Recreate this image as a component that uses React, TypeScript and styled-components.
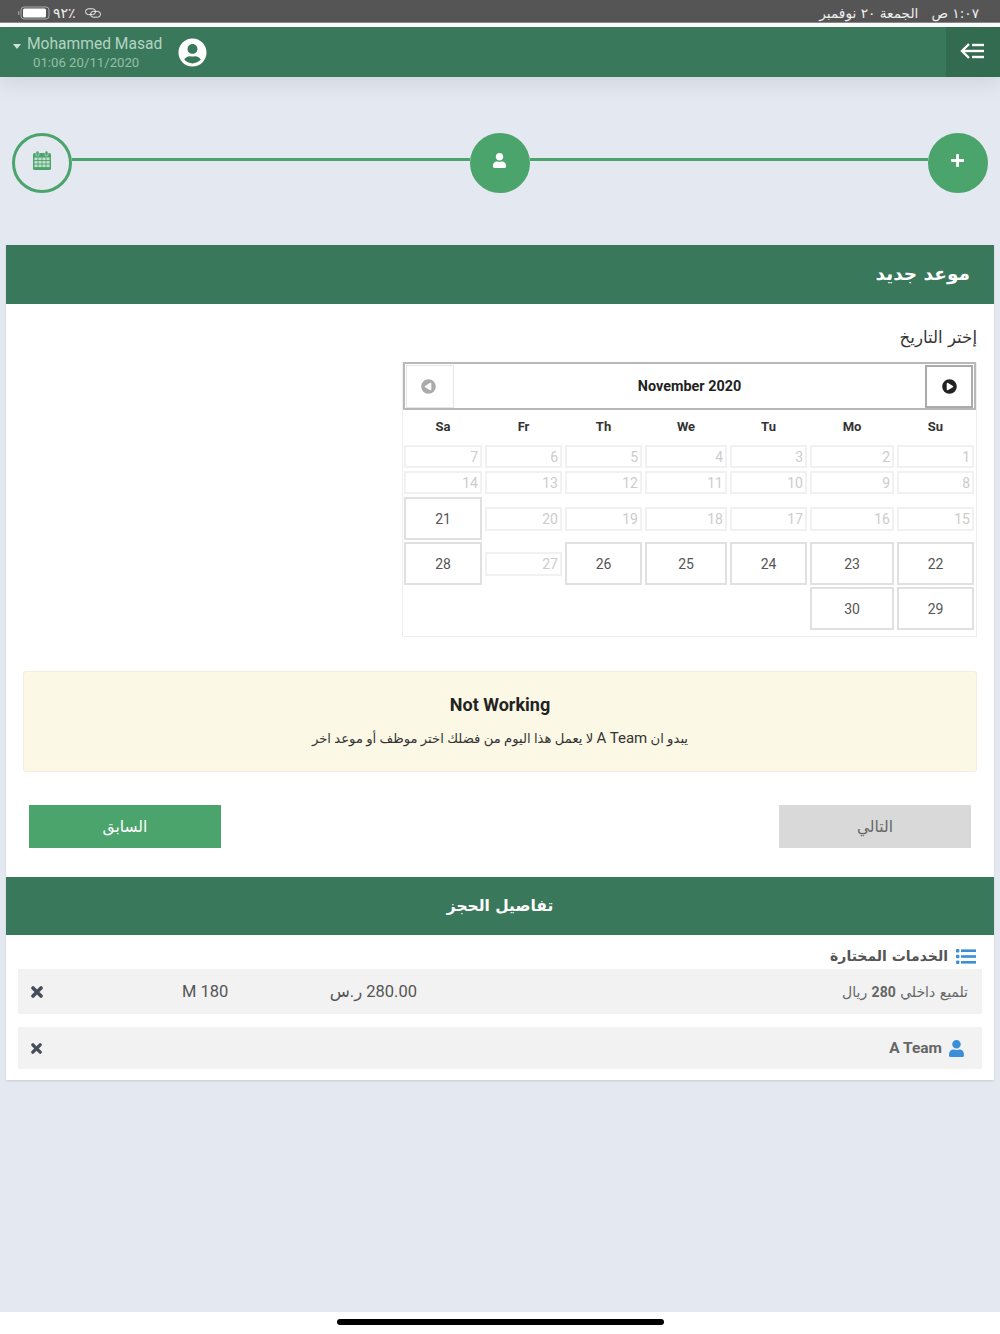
import React from "react";
import styled, { createGlobalStyle } from "styled-components";
import { FaUser, FaPlus, FaUserCircle, FaPlayCircle } from "react-icons/fa";

const Global = createGlobalStyle`
  html, body { margin: 0; padding: 0; }
  body { font-family: Roboto, "DejaVu Sans", sans-serif; background: #e4e9f1; }
  * { box-sizing: border-box; }
`;

const Page = styled.div`
  width: 1000px;
  height: 1334px;
  display: flex;
  flex-direction: column;
  overflow: hidden;
  background: #e4e9f1;
`;

const StatusBar = styled.div`
  height: 23px;
  flex: none;
  background: #555;
  border-bottom: 1px solid #8a8a8a;
  color: #f0f0f0;
  display: flex;
  align-items: center;
  justify-content: space-between;
  padding: 3px 21px 0 18px;
  font-family: "DejaVu Sans", sans-serif;
  font-size: 14px;
`;

const StatusLeft = styled.div`
  display: flex;
  align-items: center;
  gap: 3px;
`;

const StatusLink = styled.svg`
  margin-left: 6px;
`;

const StatusRight = styled.div`
  direction: rtl;
  white-space: pre;
  font-size: 13.7px;
`;

const WhiteGap = styled.div`
  height: 4px;
  flex: none;
  background: #fff;
`;

const Header = styled.header`
  height: 50px;
  flex: none;
  background: #39785a;
  display: flex;
  justify-content: space-between;
  box-shadow: 0 6px 20px rgba(60, 70, 90, 0.13);
  position: relative;
`;

const UserBlock = styled.div`
  display: flex;
  align-items: center;
  padding-left: 13px;
`;

const Caret = styled.span`
  width: 0;
  height: 0;
  border-left: 4.5px solid transparent;
  border-right: 4.5px solid transparent;
  border-top: 5px solid #cfe2d7;
  margin: 0 6px 12px 0;
`;

const UserText = styled.div`
  display: flex;
  flex-direction: column;
  padding-top: 2px;
`;

const UserName = styled.div`
  font-size: 15.6px;
  line-height: 19px;
  color: #b5d3c3;
`;

const UserDate = styled.div`
  font-size: 13.2px;
  line-height: 16px;
  color: #94bfa8;
  margin: 1px 0 0 6px;
`;

const Avatar = styled(FaUserCircle)`
  color: #fff;
  font-size: 29px;
  margin-left: 16px;
`;

const MenuButton = styled.div`
  width: 54px;
  background: #336b51;
  display: flex;
  align-items: center;
  justify-content: center;
  padding: 0 2px 2px 0;
`;

const Stepper = styled.div`
  flex: none;
  display: flex;
  padding: 56px 12px 52px;
`;

const StepCircle = styled.div<{ $outlined?: boolean }>`
  width: 60px;
  height: 60px;
  flex: none;
  border-radius: 50%;
  border: 3px solid #4ba46b;
  background: ${(p) => (p.$outlined ? "transparent" : "#4ba46b")};
  color: ${(p) => (p.$outlined ? "#4ba46b" : "#fff")};
  display: flex;
  align-items: center;
  justify-content: center;
  font-size: 18px;
  padding: 0 1px 5px 0;
`;

const StepLine = styled.div`
  flex: 1;
  height: 3px;
  margin-top: 25px;
  background: #4ba46b;
`;

const Card = styled.section`
  margin: 0 6px;
  flex: none;
  background: #fff;
  box-shadow: 0 1px 2px rgba(0, 0, 0, 0.12);
`;

const BookingHead = styled.div`
  height: 59px;
  background: #39785a;
  color: #fff;
  font-family: "DejaVu Sans", sans-serif;
  font-weight: 700;
  font-size: 18.5px;
  direction: rtl;
  display: flex;
  align-items: center;
  padding: 0 24px 3px 0;
`;

const CardBody = styled.div`
  height: 573px;
  padding: 22px 17px 0;
  display: flex;
  flex-direction: column;
`;

const FieldLabel = styled.div`
  direction: rtl;
  font-family: "DejaVu Sans", sans-serif;
  font-size: 16.6px;
  line-height: 24px;
  color: #333;
  margin-bottom: 12px;
`;

const Calendar = styled.div`
  width: 575px;
  height: 275px;
  margin-left: auto;
  border: 1px solid #eee;
  border-top: 0;
`;

const CalNav = styled.div`
  height: 48px;
  border: 2px solid #b8b8b8;
  background: #fff;
  display: flex;
  align-items: center;
  justify-content: space-between;
  padding: 1px;
  color: #222;
  font-size: 14.4px;
  font-weight: 700;
`;

const CalButton = styled.div<{ $active?: boolean }>`
  width: 48px;
  height: 43px;
  border: ${(p) => (p.$active ? "2px solid #aaa" : "1px solid #e6e6e6")};
  color: ${(p) => (p.$active ? "#222" : "#aaa")};
  display: flex;
  align-items: center;
  justify-content: center;
  font-size: 15px;
  padding-right: ${(p) => (p.$active ? "0" : "3px")};
`;

const PrevIcon = styled(FaPlayCircle)`
  transform: scaleX(-1);
`;

const CalGrid = styled.div`
  display: grid;
  grid-template-columns: 78px 77px 77px 82px 77px 84px 77px;
  grid-template-rows: 33px 24px 24px 43px 43px 43px;
  gap: 2px 3px;
  padding-left: 1px;
`;

const DayName = styled.div`
  font-size: 13px;
  font-weight: 700;
  color: #333;
  display: flex;
  align-items: center;
  justify-content: center;
`;

const DisabledDay = styled.div<{ $tall?: boolean }>`
  height: ${(p) => (p.$tall ? "24px" : "23px")};
  align-self: ${(p) => (p.$tall ? "center" : "start")};
  border: 2px solid #f1f1f1;
  color: #ccc;
  font-size: 14px;
  display: flex;
  align-items: center;
  justify-content: flex-end;
  padding-right: 2px;
`;

const ActiveDay = styled.div`
  border: 2px solid #e0e0e0;
  color: #555;
  font-size: 14px;
  display: flex;
  align-items: center;
  justify-content: center;
`;

const Alert = styled.div`
  height: 101px;
  margin-top: 34px;
  flex: none;
  background: #fcf8e6;
  border: 1px solid #f6eedb;
  border-radius: 3px;
  display: flex;
  flex-direction: column;
  align-items: center;
  color: #222;
`;

const AlertTitle = styled.div`
  margin-top: 22px;
  font-size: 18px;
  line-height: 22px;
  font-weight: 700;
`;

const AlertText = styled.div`
  margin-top: 12px;
  direction: rtl;
  font-size: 13.2px;
  line-height: 20px;
  color: #333;
`;

const AlertLatin = styled.span`
  font-size: 15px;
`;

const Actions = styled.div`
  display: flex;
  justify-content: space-between;
  padding: 0 6px;
  margin-top: 33px;
`;

const ActionButton = styled.div<{ $primary?: boolean }>`
  width: 192px;
  height: 43px;
  background: ${(p) => (p.$primary ? "#4ba46b" : "#d9d9d9")};
  color: ${(p) => (p.$primary ? "#fff" : "#666")};
  font-family: "DejaVu Sans", sans-serif;
  font-size: 15.5px;
  display: flex;
  align-items: center;
  justify-content: center;
`;

const DetailsHead = styled.div`
  height: 58px;
  background: #39785a;
  color: #fff;
  font-family: "DejaVu Sans", sans-serif;
  font-weight: 700;
  font-size: 15.5px;
  display: flex;
  align-items: center;
  justify-content: center;
`;

const Details = styled.div`
  height: 145px;
  padding: 8px 12px 0;
`;

const ServicesTitle = styled.div`
  direction: rtl;
  height: 26px;
  display: flex;
  align-items: center;
  gap: 8px;
  padding-right: 6px;
  color: #555;
  font-family: "DejaVu Sans", sans-serif;
  font-weight: 700;
  font-size: 14px;
`;

const ServiceRow = styled.div`
  height: 45px;
  background: #f2f2f2;
  display: grid;
  grid-template-columns: 151px 152px 83px 1fr;
  align-items: center;
  padding: 0 14px 0 13px;
  color: #555;
  font-size: 16.5px;
`;

const RemoveIcon = styled.svg<{ $small?: boolean }>`
  display: block;
  width: ${(p) => (p.$small ? "11px" : "12px")};
  height: ${(p) => (p.$small ? "11px" : "12px")};
  stroke: #454d57;
  stroke-width: 3.6;
  stroke-linecap: round;
`;

const ServiceName = styled.div`
  direction: rtl;
  font-size: 14px;
  color: #666;
  font-family: "DejaVu Sans", sans-serif;
`;

const Strong = styled.b`
  font-family: Roboto, sans-serif;
  font-size: 14px;
`;

const Price = styled.div`
  direction: rtl;
  white-space: nowrap;
`;

const StaffRow = styled.div`
  height: 42px;
  margin-top: 13px;
  background: #f2f2f2;
  display: flex;
  align-items: center;
  justify-content: space-between;
  padding: 0 17px 0 13px;
`;

const StaffName = styled.div`
  display: flex;
  align-items: center;
  gap: 6px;
  color: #666;
  font-size: 15.5px;
  font-weight: 700;
`;

const StaffIcon = styled(FaUser)`
  color: #3a8fd6;
  font-size: 17px;
`;

const Spacer = styled.div`
  flex: 1;
`;

const HomeBar = styled.div`
  height: 22px;
  flex: none;
  background: #fff;
  display: flex;
  justify-content: center;
  padding-top: 7px;
`;

const HomeIndicator = styled.div`
  width: 327px;
  height: 6px;
  border-radius: 3px;
  background: #000;
`;

const rows: Array<Array<{ d: number; on?: boolean }>> = [
  [7, 6, 5, 4, 3, 2, 1].map((d) => ({ d })),
  [14, 13, 12, 11, 10, 9, 8].map((d) => ({ d })),
  [{ d: 21, on: true }, { d: 20 }, { d: 19 }, { d: 18 }, { d: 17 }, { d: 16 }, { d: 15 }],
  [{ d: 28, on: true }, { d: 27 }, { d: 26, on: true }, { d: 25, on: true }, { d: 24, on: true }, { d: 23, on: true }, { d: 22, on: true }],
];

const CalendarGlyph = () => (
  <svg width="18" height="19" viewBox="0 0 18 19" aria-hidden="true">
    <rect x="0" y="2" width="18" height="17" rx="1.6" fill="#4ba46b" />
    <rect x="3" y="0" width="3" height="5" rx="1.4" fill="#4ba46b" stroke="#e4e9f1" strokeWidth="0.6" />
    <rect x="12" y="0" width="3" height="5" rx="1.4" fill="#4ba46b" stroke="#e4e9f1" strokeWidth="0.6" />
    {[6.5, 10, 13.5].map((y) =>
      [1.4, 5.4, 9.4, 13.4].map((x) => (
        <rect key={`${x}-${y}`} x={x} y={y} width="3.2" height="2.6" fill="#c4dccf" />
      ))
    )}
  </svg>
);

const ListGlyph = () => (
  <svg width="20" height="15" viewBox="0 0 20 15" fill="#3a8fd6" aria-hidden="true">
    <rect x="0" y="0" width="3.4" height="3.4" rx="1" />
    <rect x="0" y="5.8" width="3.4" height="3.4" rx="1" />
    <rect x="0" y="11.6" width="3.4" height="3.4" rx="1" />
    <rect x="5" y="0.4" width="15" height="2.6" />
    <rect x="5" y="6.2" width="15" height="2.6" />
    <rect x="5" y="12" width="15" height="2.6" />
  </svg>
);

export default function App() {
  return (
    <Page>
      <Global />
      <StatusBar>
        <StatusLeft>
          <svg width="32" height="14" viewBox="0 0 32 14" aria-hidden="true">
            <rect x="0" y="5" width="1.5" height="4" rx="0.7" fill="#999" />
            <rect x="3" y="1" width="28" height="12" rx="3" fill="none" stroke="#aaa" />
            <rect x="5" y="2.5" width="23" height="9" rx="1.5" fill="#fff" />
          </svg>
          <span dir="rtl">٪٩٢</span>
          <StatusLink width="16" height="10" viewBox="0 0 16 10" fill="none" stroke="#eee" strokeWidth="1" aria-hidden="true">
            <rect x="0.5" y="0.8" width="10" height="5.8" rx="2.9" />
            <rect x="5.5" y="3.4" width="10" height="5.8" rx="2.9" />
          </StatusLink>
        </StatusLeft>
        <StatusRight>{"١:٠٧ ص   الجمعة ٢٠ نوفمبر"}</StatusRight>
      </StatusBar>
      <WhiteGap />
      <Header>
        <UserBlock>
          <Caret />
          <UserText>
            <UserName>Mohammed Masad</UserName>
            <UserDate>01:06 20/11/2020</UserDate>
          </UserText>
          <Avatar />
        </UserBlock>
        <MenuButton>
          <svg width="24" height="16" viewBox="0 0 24 16" fill="none" stroke="#fff" strokeWidth="2.4" aria-hidden="true">
            <path d="M9 1 L2 8 L9 15" />
            <path d="M2 8 H24" />
            <path d="M12 2 H24" />
            <path d="M12 14 H24" />
          </svg>
        </MenuButton>
      </Header>
      <Stepper>
        <StepCircle $outlined>
          <CalendarGlyph />
        </StepCircle>
        <StepLine />
        <StepCircle>
          <FaUser size={15} />
        </StepCircle>
        <StepLine />
        <StepCircle>
          <FaPlus size={15} />
        </StepCircle>
      </Stepper>
      <Card>
        <BookingHead>موعد جديد</BookingHead>
        <CardBody>
          <FieldLabel>إختر التاريخ</FieldLabel>
          <Calendar>
            <CalNav>
              <CalButton>
                <PrevIcon />
              </CalButton>
              <span>November 2020</span>
              <CalButton $active>
                <FaPlayCircle />
              </CalButton>
            </CalNav>
            <CalGrid>
              {["Sa", "Fr", "Th", "We", "Tu", "Mo", "Su"].map((n) => (
                <DayName key={n}>{n}</DayName>
              ))}
              {rows.flat().map((c) =>
                c.on ? (
                  <ActiveDay key={c.d}>{c.d}</ActiveDay>
                ) : (
                  <DisabledDay key={c.d} $tall={c.d >= 15}>
                    {c.d}
                  </DisabledDay>
                )
              )}
              {[0, 1, 2, 3, 4].map((i) => (
                <span key={i} />
              ))}
              <ActiveDay>30</ActiveDay>
              <ActiveDay>29</ActiveDay>
            </CalGrid>
          </Calendar>
          <Alert>
            <AlertTitle>Not Working</AlertTitle>
            <AlertText>
              يبدو ان <AlertLatin>A Team</AlertLatin> لا يعمل هذا اليوم من فضلك اختر موظف أو موعد اخر
            </AlertText>
          </Alert>
          <Actions>
            <ActionButton $primary>السابق</ActionButton>
            <ActionButton>التالي</ActionButton>
          </Actions>
        </CardBody>
        <DetailsHead>تفاصيل الحجز</DetailsHead>
        <Details>
          <ServicesTitle>
            <ListGlyph />
            الخدمات المختارة
          </ServicesTitle>
          <ServiceRow>
            <RemoveIcon viewBox="0 0 12 12" aria-hidden="true">
              <path d="M2 2 L10 10 M10 2 L2 10" />
            </RemoveIcon>
            <span>M 180</span>
            <Price>280.00 ر.س</Price>
            <ServiceName>
              تلميع داخلي <Strong>280</Strong> ريال
            </ServiceName>
          </ServiceRow>
          <StaffRow>
            <RemoveIcon $small viewBox="0 0 12 12" aria-hidden="true">
              <path d="M2 2 L10 10 M10 2 L2 10" />
            </RemoveIcon>
            <StaffName>
              A Team
              <StaffIcon />
            </StaffName>
          </StaffRow>
        </Details>
      </Card>
      <Spacer />
      <HomeBar>
        <HomeIndicator />
      </HomeBar>
    </Page>
  );
}
